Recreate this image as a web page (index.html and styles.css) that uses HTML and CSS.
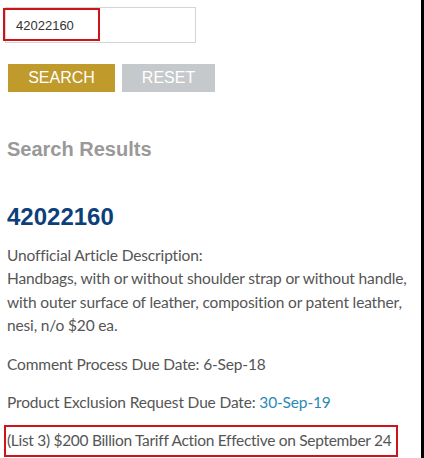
FILE: index.html
```html
<!DOCTYPE html>
<html>
<head>
<meta charset="utf-8">
<link rel="stylesheet" href="styles.css">
</head>
<body>
<div class="page">
  <div class="content">
    <div class="field">
      <span class="field-value">42022160</span>
      <span class="mark mark-field"></span>
    </div>
    <div class="buttons">
      <button class="btn btn-search">SEARCH</button>
      <button class="btn btn-reset">RESET</button>
    </div>
    <h2 class="results-title">Search Results</h2>
    <h1 class="code">42022160</h1>
    <p class="desc">Unofficial Article Description:<br>Handbags, with or without shoulder strap or without handle, with outer surface of leather, composition or patent leather, nesi, n/o $20 ea.</p>
    <p class="line">Comment Process Due Date: 6-Sep-18</p>
    <p class="line">Product Exclusion Request Due Date: <a class="link">30-Sep-19</a></p>
    <p class="line line-marked">(List 3) $200 Billion Tariff Action Effective on September 24<span class="mark mark-line"></span></p>
  </div>
  <div class="edge"></div>
</div>
</body>
</html>
```
FILE: styles.css
```css
html, body {
  margin: 0;
  padding: 0;
  background: #fff;
}
.page {
  display: flex;
  width: 424px;
  height: 458px;
  overflow: hidden;
}
.content {
  flex: 1;
  padding-left: 7px;
  padding-top: 7px;
}
.edge {
  width: 3px;
  background: #000;
}
.field {
  position: relative;
  margin-left: -2px;
  width: 189px;
  height: 34px;
  border: 1px solid #d4d4d4;
  display: flex;
  align-items: center;
  font-family: "Liberation Sans", Arial, sans-serif;
  font-size: 13px;
  color: #333;
}
.field-value {
  padding-left: 10px;
}
.mark {
  position: absolute;
  border: 2px solid #d0121b;
}
.mark-field {
  left: -3px;
  top: 0px;
  width: 93px;
  height: 29px;
}
.buttons {
  display: flex;
  gap: 7px;
  margin-top: 21px;
  margin-left: 1px;
}
.btn {
  border: none;
  height: 28px;
  padding: 0;
  color: #fff;
  font-family: "Liberation Sans", Arial, sans-serif;
  font-size: 16px;
}
.btn-search {
  width: 107px;
  background: #c09a2b;
}
.btn-reset {
  width: 93px;
  background: #c6c9cc;
}
.results-title {
  margin: 45px 0 0;
  font-family: "Liberation Sans", Arial, sans-serif;
  font-weight: bold;
  font-size: 20px;
  line-height: 24px;
  color: #999;
}
.code {
  margin: 42px 0 0;
  font-family: "Liberation Sans", Arial, sans-serif;
  font-weight: bold;
  font-size: 24px;
  line-height: 28px;
  color: #0d3f7a;
}
.desc, .line {
  font-family: Lato, sans-serif;
  font-size: 15.5px;
  letter-spacing: -0.15px;
  line-height: 23px;
  color: #555;
  margin: 0;
}
.desc {
  margin-top: 13px;
  line-height: 23.4px;
}
.line {
  margin-top: 15px;
}
.link {
  color: #2b8ab4;
}
.line-marked {
  position: relative;
  letter-spacing: -0.3px;
}
.mark-line {
  left: -3px;
  top: -4px;
  width: 390px;
  height: 28px;
}
```
